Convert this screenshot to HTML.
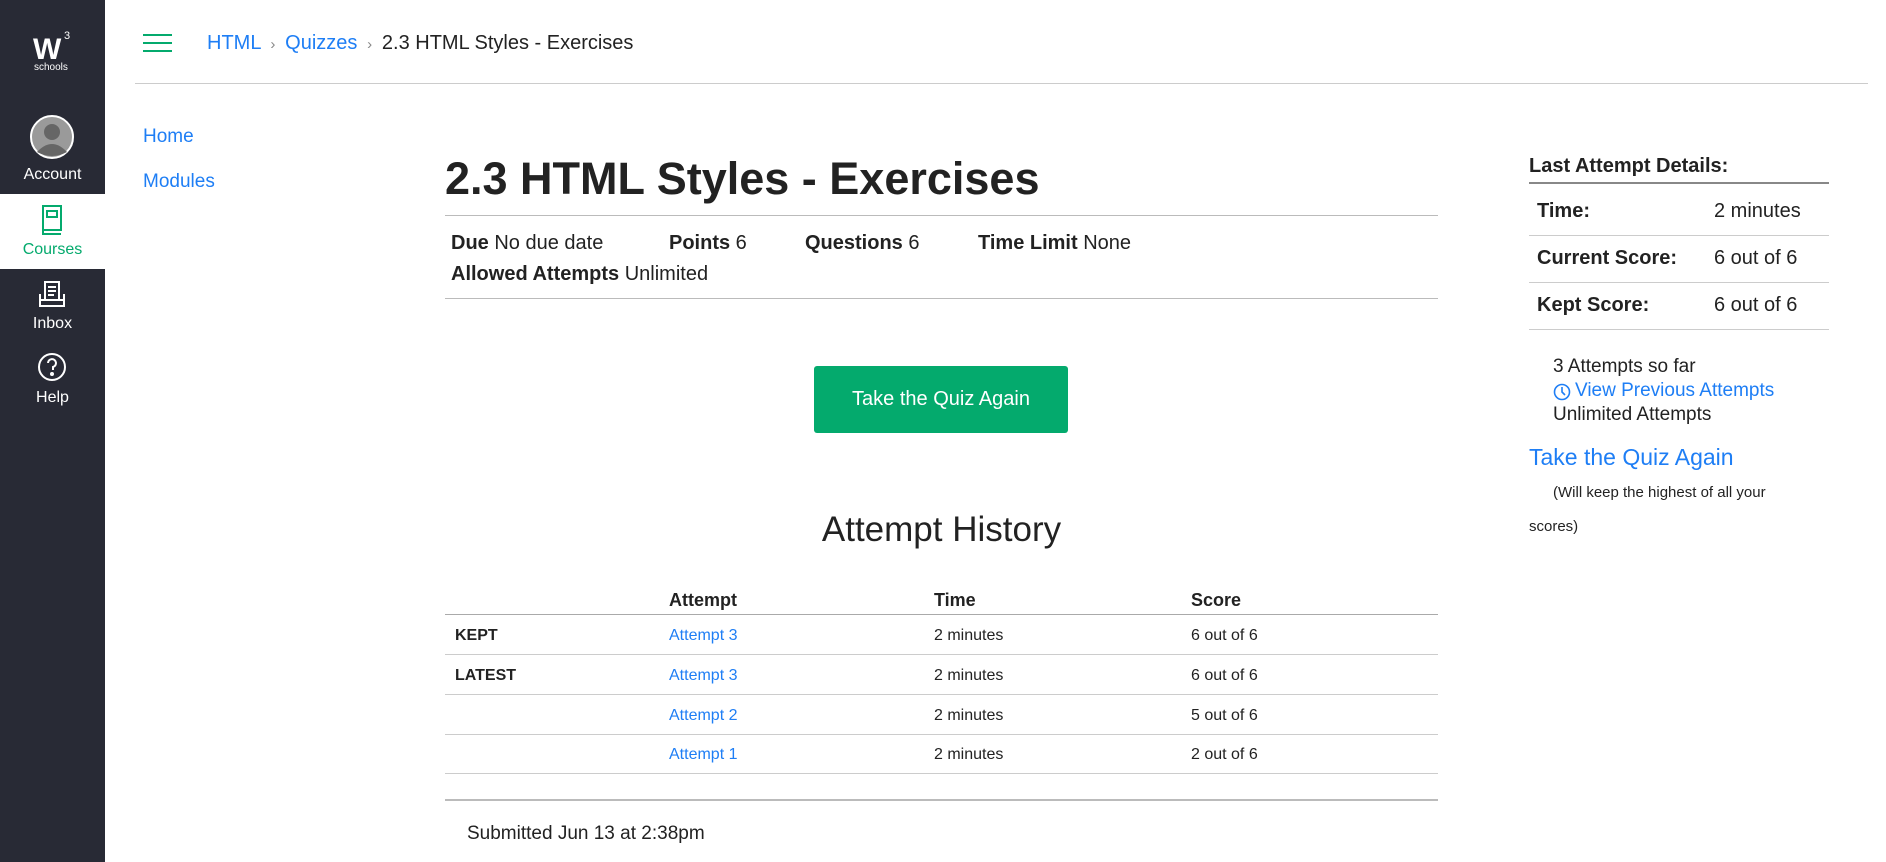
<!DOCTYPE html>
<html><head><meta charset="utf-8"><style>
*{margin:0;padding:0;box-sizing:border-box}
body{width:1886px;height:862px;position:relative;overflow:hidden;background:#fff;font-family:"Liberation Sans",sans-serif;color:#222}
.a{position:absolute;white-space:nowrap}
.side{position:absolute;left:0;top:0;width:105px;height:862px;background:#282a35}
.sl{position:absolute;width:105px;text-align:center;color:#fff;font-size:16px}
.blue{color:#1e7ef5}
.hl{position:absolute;height:1px;background:#ccc}
.b{font-weight:bold}
</style></head><body>
<div class="side"></div>
<div class="a" style="left:0;top:194px;width:105px;height:75px;background:#fff"></div>
<div class="a b" style="left:33px;top:33px;color:#fff;font-size:30px;font-family:'Liberation Sans',sans-serif;letter-spacing:-3px">W</div>
<div class="a" style="left:64px;top:30px;color:#fff;font-size:11px">3</div>
<div class="a" style="left:34px;top:62px;color:#fff;font-size:10px">schools</div>
<svg class="a" style="left:29px;top:114px" width="46" height="46" viewBox="0 0 46 46"><circle cx="23" cy="23" r="21" fill="#9a9a9a" stroke="#fff" stroke-width="2"/><circle cx="23" cy="18" r="8" fill="#666"/><path d="M8 38 Q23 22 38 38 Q23 46 8 38Z" fill="#666"/></svg>
<div class="sl" style="top:166px">Account</div>
<svg class="a" style="left:40px;top:205px" width="24" height="30" viewBox="0 0 24 30" fill="none" stroke="#04aa6d" stroke-width="2"><rect x="3" y="1" width="18" height="24"/><rect x="7" y="6" width="10" height="6"/><path d="M3 25 v4 h18"/></svg>
<div class="sl" style="top:241px;color:#04aa6d">Courses</div>
<svg class="a" style="left:38px;top:280px" width="28" height="28" viewBox="0 0 28 28" fill="none" stroke="#fff" stroke-width="2"><rect x="7" y="2" width="14" height="18"/><path d="M10 7h8M10 11h8M10 15h6M2 14v12h24V14M2 20h24"/></svg>
<div class="sl" style="top:315px">Inbox</div>
<svg class="a" style="left:37px;top:352px" width="30" height="30" viewBox="0 0 30 30" fill="none" stroke="#fff" stroke-width="2"><circle cx="15" cy="15" r="13"/><path d="M11 11a4 4 0 1 1 5 4v3"/><circle cx="15" cy="22" r="1" fill="#fff"/></svg>
<div class="sl" style="top:389px">Help</div>

<div class="a" style="left:143px;top:34px;width:29px;height:2px;background:#04aa6d"></div>
<div class="a" style="left:143px;top:42px;width:29px;height:2px;background:#04aa6d"></div>
<div class="a" style="left:143px;top:50px;width:29px;height:2px;background:#04aa6d"></div>
<div class="a" style="left:207px;top:32px;font-size:20px"><span class="blue">HTML</span> <span style="color:#888;font-size:15px">&nbsp;›&nbsp;</span> <span class="blue">Quizzes</span> <span style="color:#888;font-size:15px">&nbsp;›&nbsp;</span> 2.3 HTML Styles - Exercises</div>
<div class="hl" style="left:135px;top:83px;width:1733px"></div>

<div class="a blue" style="left:143px;top:126px;font-size:19px">Home</div>
<div class="a blue" style="left:143px;top:171px;font-size:19px">Modules</div>

<div class="a b" style="left:445px;top:153px;font-size:45px">2.3 HTML Styles - Exercises</div>
<div class="hl" style="left:445px;top:215px;width:993px;background:#bbb"></div>
<div class="a" style="left:451px;top:232px;font-size:20px"><b>Due</b> No due date</div>
<div class="a" style="left:669px;top:232px;font-size:20px"><b>Points</b> 6</div>
<div class="a" style="left:805px;top:232px;font-size:20px"><b>Questions</b> 6</div>
<div class="a" style="left:978px;top:232px;font-size:20px"><b>Time Limit</b> None</div>
<div class="a" style="left:451px;top:263px;font-size:20px"><b>Allowed Attempts</b> Unlimited</div>
<div class="hl" style="left:445px;top:298px;width:993px;background:#bbb"></div>

<div class="a" style="left:814px;top:366px;width:254px;height:67px;background:#04aa6d;border-radius:3px;color:#fff;font-size:20px;text-align:center;line-height:67px">Take the Quiz Again</div>

<div class="a" style="left:445px;top:510px;width:993px;text-align:center;font-size:35px">Attempt History</div>
<div class="a b" style="left:669px;top:590px;font-size:18px">Attempt</div>
<div class="a b" style="left:934px;top:590px;font-size:18px">Time</div>
<div class="a b" style="left:1191px;top:590px;font-size:18px">Score</div>
<div class="hl" style="left:445px;top:614px;width:993px;background:#aaa"></div>
<div class="a b" style="left:455px;top:627px;font-size:16px">KEPT</div>
<div class="a b" style="left:455px;top:667px;font-size:16px">LATEST</div>
<div class="a blue" style="left:669px;top:627px;font-size:16px">Attempt 3</div>
<div class="a blue" style="left:669px;top:667px;font-size:16px">Attempt 3</div>
<div class="a blue" style="left:669px;top:707px;font-size:16px">Attempt 2</div>
<div class="a blue" style="left:669px;top:746px;font-size:16px">Attempt 1</div>
<div class="a" style="left:934px;top:627px;font-size:16px">2 minutes</div>
<div class="a" style="left:934px;top:667px;font-size:16px">2 minutes</div>
<div class="a" style="left:934px;top:707px;font-size:16px">2 minutes</div>
<div class="a" style="left:934px;top:746px;font-size:16px">2 minutes</div>
<div class="a" style="left:1191px;top:627px;font-size:16px">6 out of 6</div>
<div class="a" style="left:1191px;top:667px;font-size:16px">6 out of 6</div>
<div class="a" style="left:1191px;top:707px;font-size:16px">5 out of 6</div>
<div class="a" style="left:1191px;top:746px;font-size:16px">2 out of 6</div>
<div class="hl" style="left:445px;top:654px;width:993px"></div>
<div class="hl" style="left:445px;top:694px;width:993px"></div>
<div class="hl" style="left:445px;top:734px;width:993px"></div>
<div class="hl" style="left:445px;top:773px;width:993px"></div>
<div class="hl" style="left:445px;top:799px;width:993px;height:2px;background:#bbb"></div>
<div class="a" style="left:467px;top:823px;font-size:19px">Submitted Jun 13 at 2:38pm</div>

<div class="a b" style="left:1529px;top:155px;font-size:20px">Last Attempt Details:</div>
<div class="hl" style="left:1529px;top:182px;width:300px;height:2px;background:#888"></div>
<div class="a b" style="left:1537px;top:200px;font-size:20px">Time:</div>
<div class="a" style="left:1714px;top:200px;font-size:20px">2 minutes</div>
<div class="hl" style="left:1529px;top:235px;width:300px"></div>
<div class="a b" style="left:1537px;top:247px;font-size:20px">Current Score:</div>
<div class="a" style="left:1714px;top:247px;font-size:20px">6 out of 6</div>
<div class="hl" style="left:1529px;top:282px;width:300px"></div>
<div class="a b" style="left:1537px;top:294px;font-size:20px">Kept Score:</div>
<div class="a" style="left:1714px;top:294px;font-size:20px">6 out of 6</div>
<div class="hl" style="left:1529px;top:329px;width:300px"></div>
<div class="a" style="left:1553px;top:356px;font-size:19px">3 Attempts so far</div>
<svg class="a" style="left:1553px;top:383px" width="18" height="18" viewBox="0 0 18 18" fill="none" stroke="#1e7ef5" stroke-width="1.6"><circle cx="9" cy="9" r="7.5"/><path d="M9 4v5l3 3"/></svg>
<div class="a blue" style="left:1575px;top:380px;font-size:19px">View Previous Attempts</div>
<div class="a" style="left:1553px;top:404px;font-size:19px">Unlimited Attempts</div>
<div class="a blue" style="left:1529px;top:444px;font-size:23px">Take the Quiz Again</div>
<div class="a" style="left:1553px;top:484px;font-size:15px">(Will keep the highest of all your</div>
<div class="a" style="left:1529px;top:518px;font-size:15px">scores)</div>
</body></html>
